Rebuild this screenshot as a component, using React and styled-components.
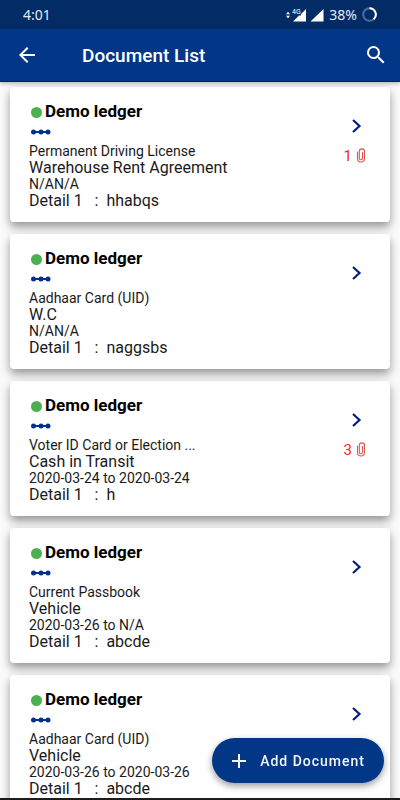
import React from 'react'
import styled, { createGlobalStyle } from 'styled-components'

const GlobalStyles = createGlobalStyle`
  * {
    box-sizing: border-box;
  }
  body {
    margin: 0;
    background: #fafafa;
    font-family: Roboto, 'Noto Sans', sans-serif;
    color: #000;
  }
  button {
    font-family: inherit;
    border: none;
    padding: 0;
    background: none;
    cursor: pointer;
  }
`;

const ScreenStyles = styled.div`
  display: flex;
  flex-direction: column;
  height: 100vh;
  overflow: hidden;
  border-bottom: 2px solid #1c1c1c;
`;

const StatusBarStyles = styled.div`
  display: flex;
  align-items: center;
  justify-content: space-between;
  flex: none;
  height: 29px;
  padding: 0 23px;
  background: #032c66;
  color: #e4eaf2;
  font-family: 'Noto Sans', sans-serif;
  font-size: 14px;
  line-height: 20px;
  .status-icons {
    display: flex;
    align-items: center;
  }
  .battery {
    margin: 0 5px;
  }
`;

const HeaderStyles = styled.header`
  display: flex;
  align-items: center;
  flex: none;
  height: 53px;
  padding: 0 12px 0 15px;
  background: #023788;
  border-bottom: 1px solid #02215f;
  box-shadow: 0 2px 4px rgba(0, 0, 0, 0.25);
  color: #fff;
  z-index: 1;
  h1 {
    flex: 1;
    margin: 2px 0 0 43px;
    font-size: 19px;
    line-height: 24px;
    font-weight: 500;
  }
`;

const IconButton = styled.button`
  display: flex;
  color: inherit;
`;

const ListStyles = styled.ul`
  display: flex;
  flex-direction: column;
  flex: 1;
  gap: 12px;
  min-height: 0;
  margin: 0;
  padding: 5px 10px;
  list-style: none;
  overflow-y: auto;
  scrollbar-width: none;
`;

const CardStyles = styled.li`
  display: flex;
  flex: none;
  justify-content: space-between;
  padding: 14px 24px 12px 19px;
  border-radius: 4px;
  background: #fff;
  box-shadow: 0 5px 10px rgba(0, 0, 0, 0.4);
  .chain {
    display: block;
    margin: 8px 0 9px 1px;
  }
`;

const CardTitle = styled.h2`
  display: flex;
  align-items: center;
  gap: 3px;
  margin: 0 0 0 2px;
  font-size: 17px;
  line-height: 20px;
  font-weight: 700;
`;

const StatusDot = styled.span`
  width: 11px;
  height: 11px;
  margin-top: 2px;
  border-radius: 50%;
  background: #4caf50;
`;

const CardLine = styled.p`
  margin: 0;
  font-size: ${({ $large }) => ($large ? '16px' : '14px')};
  line-height: ${({ $large }) => ($large ? '18px' : '15px')};
  color: #1a1a1a;
  white-space: pre;
`;

const CardSide = styled.div`
  display: flex;
  flex-direction: column;
  align-items: flex-end;
  gap: 11px;
  padding-top: 15px;
  .chevron {
    margin-right: 4px;
    color: #021f7c;
  }
`;

const Attachments = styled.span`
  display: flex;
  align-items: center;
  gap: 4px;
  font-size: 15px;
  line-height: 18px;
  color: #f02c20;
`;

const AddButton = styled.button`
  position: fixed;
  right: 16px;
  bottom: 17px;
  display: flex;
  align-items: center;
  gap: 13px;
  height: 45px;
  padding: 0 19px;
  border-radius: 23px;
  background: #023788;
  box-shadow: 0 3px 7px rgba(0, 0, 0, 0.4);
  color: #f4f6fa;
  font-size: 14px;
  font-weight: 500;
  letter-spacing: 1px;
  z-index: 2;
`;

const documents = [
  { type: 'Permanent Driving License', name: 'Warehouse Rent Agreement', dates: 'N/AN/A', detail: 'hhabqs', files: 1 },
  { type: 'Aadhaar Card (UID)', name: 'W.C', dates: 'N/AN/A', detail: 'naggsbs' },
  { type: 'Voter ID Card or Election ...', name: 'Cash in Transit', dates: '2020-03-24 to 2020-03-24', detail: 'h', files: 3 },
  { type: 'Current Passbook', name: 'Vehicle', dates: '2020-03-26 to N/A', detail: 'abcde' },
  { type: 'Aadhaar Card (UID)', name: 'Vehicle', dates: '2020-03-26 to 2020-03-26', detail: 'abcde' },
]

function StatusBar() {
  return (
    <StatusBarStyles>
      <span>4:01</span>
      <div className='status-icons'>
        <svg width='38' height='16' viewBox='0 0 38 16' fill='#fff'>
          <path d='M0 7.2 L2 4.8 L4 7.2Z M0 8.8 L2 11.2 L4 8.8Z' />
          <path d='M20 2 V14.500 H7 L13 8.500 H15 V7Z' />
          <path d='M37.500 2 V14.500 H24.500Z' />
          <text x='6' y='7' fontSize='7' fontFamily='Roboto'>4G</text>
        </svg>
        <span className='battery'>38%</span>
        <svg width='15' height='15' viewBox='0 0 15 15' fill='none' strokeWidth='2'>
          <circle cx='7.5' cy='7.5' r='6.3' stroke='#4d6c98' />
          <path d='M7.5 1.200 A6.300 6.300 0 0 1 11.700 12.200' stroke='#fff' />
        </svg>
      </div>
    </StatusBarStyles>
  )
}

function Header() {
  return (
    <HeaderStyles>
      <IconButton aria-label='Back'>
        <svg width='24' height='24' viewBox='0 0 24 24' fill='currentColor'>
          <path d='M20 11H7.830l5.590-5.590L12 4l-8 8 8 8 1.410-1.410L7.830 13H20v-2z' />
        </svg>
      </IconButton>
      <h1>Document List</h1>
      <IconButton aria-label='Search'>
        <svg width='24' height='24' viewBox='0 0 24 24' fill='currentColor'>
          <path d='M15.500 14h-.790l-.280-.270A6.471 6.471 0 0 0 16 9.500 6.500 6.500 0 1 0 9.500 16c1.610 0 3.090-.590 4.230-1.570l.270.280v.790l5 4.990L20.490 19l-4.990-5zm-6 0C7.010 14 5 11.990 5 9.500S7.010 5 9.500 5 14 7.010 14 9.500 11.990 14 9.500 14z' />
        </svg>
      </IconButton>
    </HeaderStyles>
  )
}

function DocumentCard({ doc }) {
  return (
    <CardStyles>
      <div>
        <CardTitle><StatusDot />Demo ledger</CardTitle>
        <svg className='chain' width='21' height='6' viewBox='0 0 21 6' fill='#02308c'>
          <rect x='2' y='2' width='16' height='2' />
          <circle cx='3.500' cy='3' r='2.5' />
          <circle cx='11' cy='3' r='2.5' />
          <circle cx='18' cy='3' r='2.5' />
        </svg>
        <CardLine>{doc.type}</CardLine>
        <CardLine $large>{doc.name}</CardLine>
        <CardLine>{doc.dates}</CardLine>
        <CardLine $large>{`Detail 1   :  ${doc.detail}`}</CardLine>
      </div>
      <CardSide>
        <IconButton className='chevron' aria-label='Open document'>
          <svg width='11' height='20' viewBox='0 0 11 20' fill='none' stroke='currentColor' strokeWidth='2.2'>
            <path d='M2 4 L8.500 10 L2 16' />
          </svg>
        </IconButton>
        {doc.files && (
          <Attachments>
            {doc.files}
            <svg width='10' height='16' viewBox='0 0 10 16' fill='none' stroke='#d9584c' strokeWidth='1.100' strokeLinecap='round'>
              <path d='M1.500 4 V10.500 A3.500 3.500 0 0 0 8.500 10.500 V3.500 A2.600 2.600 0 0 0 3.300 3.500 V10.200 A1.600 1.600 0 0 0 6.500 10.200 V4.500' />
            </svg>
          </Attachments>
        )}
      </CardSide>
    </CardStyles>
  )
}

function App() {
  return (
    <ScreenStyles>
      <GlobalStyles />
      <StatusBar />
      <Header />
      <ListStyles>
        {documents.map((doc, index) => (
          <DocumentCard key={index} doc={doc} />
        ))}
      </ListStyles>
      <AddButton>
        <svg width='16' height='16' viewBox='0 0 16 16' stroke='currentColor' strokeWidth='2'>
          <path d='M8 1 V15 M1 8 H15' />
        </svg>
        Add Document
      </AddButton>
    </ScreenStyles>
  )
}

export default App
